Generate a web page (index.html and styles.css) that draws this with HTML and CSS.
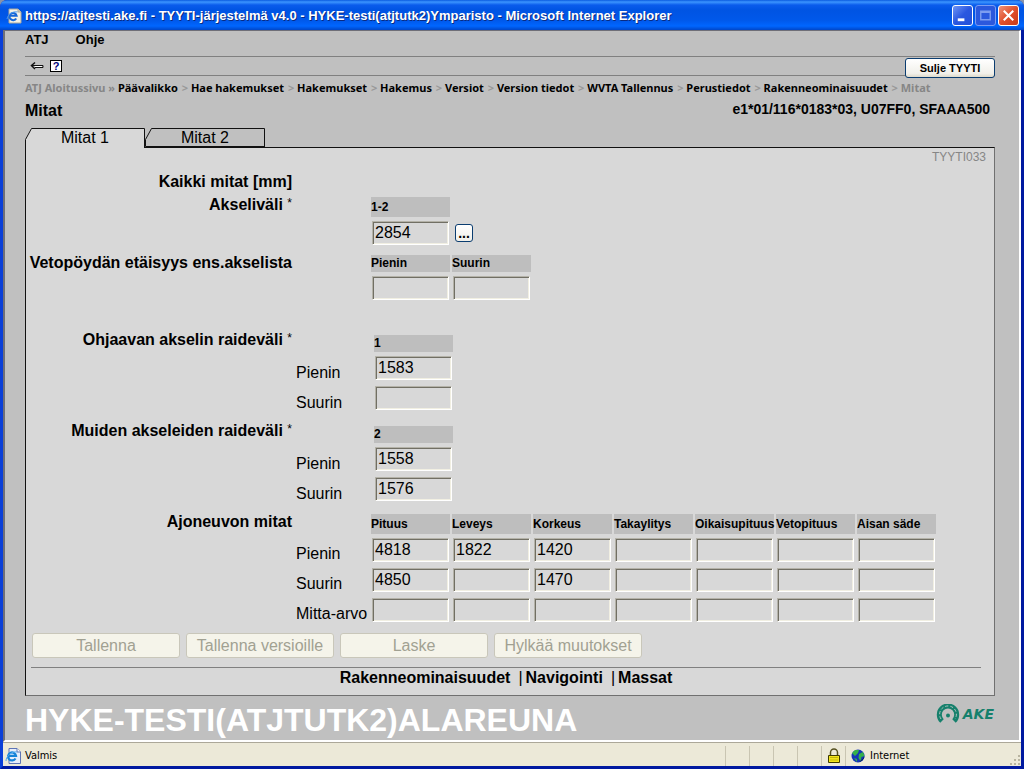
FILE: index.html
```html
<!DOCTYPE html>
<html lang="fi">
<head>
<meta charset="utf-8">
<title>TYYTI-järjestelmä v4.0</title>
<link rel="stylesheet" href="styles.css">
</head>
<body>
<div class="window">
  <header class="titlebar">
    <svg class="title-icon" viewBox="0 0 16 16" aria-hidden="true">
      <path d="M3 1h9l3 3v11H3z" fill="#f4f1e6" stroke="#a9a79b" stroke-width="1"/>
      <path d="M12 1v3h3" fill="#d5d2c4" stroke="#a9a79b" stroke-width="1"/>
      <path d="M10.2 10.4A3.6 3.6 0 1 1 10.600 7.700H4.500" fill="none" stroke="#1667d8" stroke-width="2"/>
      <path d="M1 11C2 6 7 3 11.500 4" fill="none" stroke="#4b9bf0" stroke-width="1"/>
    </svg>
    <h1 class="title-text">https://atjtesti.ake.fi - TYYTI-järjestelmä v4.0 - HYKE-testi(atjtutk2)Ymparisto - Microsoft Internet Explorer</h1>
    <div class="window-buttons">
      <button class="win-btn" type="button" aria-label="Minimize"><svg viewBox="0 0 20 20"><path d="M5 13h7v3H5z" fill="#fff"/></svg></button>
      <button class="win-btn win-btn-dim" type="button" aria-label="Maximize"><svg viewBox="0 0 20 20"><path d="M5 5.500h10v9H5zM5 6.500h10" fill="none" stroke="#7d9cf0" stroke-width="1.500"/></svg></button>
      <button class="win-btn win-btn-close" type="button" aria-label="Close"><svg viewBox="0 0 20 20"><path d="M5 5l10 10M15 5L5 15" stroke="#fff" stroke-width="2.200"/></svg></button>
    </div>
  </header>

  <div class="frame">
    <main class="page">
      <nav class="menu">
        <a href="#">ATJ</a>
        <a href="#">Ohje</a>
      </nav>
      <div class="toolbar">
        <div class="tools">
          <button class="tool" type="button" aria-label="Takaisin"><svg width="14" height="10" viewBox="0 0 14 10"><path d="M5 5.500h7" fill="none" stroke="#fff"/><path d="M5 1.500L1.500 4.500 5 8" fill="none" stroke="#111" stroke-width="1.500"/><path d="M2 4.500H13v2H5" fill="none" stroke="#111"/></svg></button>
          <button class="tool help" type="button" aria-label="Ohje">?</button>
        </div>
        <button class="close-app" type="button">Sulje TYYTI</button>
      </div>
      <nav class="crumbs"><span>ATJ Aloitussivu »</span> <a href="#">Päävalikko</a> <i>&gt;</i> <a href="#">Hae hakemukset</a> <i>&gt;</i> <a href="#">Hakemukset</a> <i>&gt;</i> <a href="#">Hakemus</a> <i>&gt;</i> <a href="#">Versiot</a> <i>&gt;</i> <a href="#">Version tiedot</a> <i>&gt;</i> <a href="#">WVTA Tallennus</a> <i>&gt;</i> <a href="#">Perustiedot</a> <i>&gt;</i> <a href="#">Rakenneominaisuudet</a> <i>&gt;</i> <span>Mitat</span></nav>
      <div class="heading">
        <h2>Mitat</h2>
        <strong>e1*01/116*0183*03, U07FF0, SFAAA500</strong>
      </div>

      <div class="tabs">
        <button class="tab tab-active" type="button">
          <svg viewBox="0 0 120 20" aria-hidden="true"><path d="M0 20V12L6 0H120V20z" fill="#d8d8d8"/><path d="M.5 20V11.500L6.500.5H119.500V20" fill="none" stroke="#111"/></svg>
          <span>Mitat 1</span>
        </button>
        <button class="tab" type="button">
          <svg viewBox="0 0 120 20" aria-hidden="true"><path d="M.5 18.500V11.500L6.500.5H119.500V20M.5 18.500H119.500" fill="none" stroke="#111"/></svg>
          <span>Mitat 2</span>
        </button>
      </div>

      <form class="panel">
        <div class="code">TYYTI033</div>
        <div class="group group-first"><div class="label">Kaikki mitat [mm]</div></div>

        <div class="group g1">
          <div class="label">Akseliväli <sup>*</sup></div>
          <table class="fields">
            <tr><td class="side"></td><th class="col">1-2</th></tr>
            <tr><td class="side"></td><td><input aria-label="Akseliväli 1-2" value="2854"></td><td><button class="more" type="button">...</button></td></tr>
          </table>
        </div>

        <div class="group g2">
          <div class="label">Vetopöydän etäisyys ens.akselista</div>
          <table class="fields short">
            <tr><td class="side"></td><th class="col">Pienin</th><th class="col">Suurin</th></tr>
            <tr><td class="side"></td><td><input aria-label="Vetopöytä pienin"></td><td><input aria-label="Vetopöytä suurin"></td></tr>
          </table>
        </div>

        <div class="group g3">
          <div class="label">Ohjaavan akselin raideväli <sup>*</sup></div>
          <table class="fields short inset">
            <tr><td class="side"></td><th class="col">1</th></tr>
            <tr><th class="side"><label for="o1">Pienin</label></th><td><input id="o1" value="1583"></td></tr>
            <tr><th class="side"><label for="o2">Suurin</label></th><td><input id="o2"></td></tr>
          </table>
        </div>

        <div class="group g4">
          <div class="label">Muiden akseleiden raideväli <sup>*</sup></div>
          <table class="fields short inset">
            <tr><td class="side"></td><th class="col">2</th></tr>
            <tr><th class="side"><label for="m1">Pienin</label></th><td><input id="m1" value="1558"></td></tr>
            <tr><th class="side"><label for="m2">Suurin</label></th><td><input id="m2" value="1576"></td></tr>
          </table>
        </div>

        <div class="group g5">
          <div class="label">Ajoneuvon mitat</div>
          <table class="fields">
            <tr><td class="side"></td><th class="col">Pituus</th><th class="col">Leveys</th><th class="col">Korkeus</th><th class="col">Takaylitys</th><th class="col">Oikaisupituus</th><th class="col">Vetopituus</th><th class="col">Aisan säde</th></tr>
            <tr><th class="side"><label for="a1">Pienin</label></th><td><input id="a1" value="4818"></td><td><input aria-label="Leveys pienin" value="1822"></td><td><input aria-label="Korkeus pienin" value="1420"></td><td><input aria-label="Takaylitys pienin"></td><td><input aria-label="Oikaisupituus pienin"></td><td><input aria-label="Vetopituus pienin"></td><td><input aria-label="Aisan säde pienin"></td></tr>
            <tr><th class="side"><label for="a2">Suurin</label></th><td><input id="a2" value="4850"></td><td><input aria-label="Leveys suurin"></td><td><input aria-label="Korkeus suurin" value="1470"></td><td><input aria-label="Takaylitys suurin"></td><td><input aria-label="Oikaisupituus suurin"></td><td><input aria-label="Vetopituus suurin"></td><td><input aria-label="Aisan säde suurin"></td></tr>
            <tr><th class="side"><label for="a3">Mitta-arvo</label></th><td><input id="a3"></td><td><input aria-label="Leveys mitta-arvo"></td><td><input aria-label="Korkeus mitta-arvo"></td><td><input aria-label="Takaylitys mitta-arvo"></td><td><input aria-label="Oikaisupituus mitta-arvo"></td><td><input aria-label="Vetopituus mitta-arvo"></td><td><input aria-label="Aisan säde mitta-arvo"></td></tr>
          </table>
        </div>

        <div class="actions">
          <button type="button" disabled>Tallenna</button>
          <button type="button" disabled>Tallenna versioille</button>
          <button type="button" disabled>Laske</button>
          <button type="button" disabled>Hylkää muutokset</button>
        </div>
        <nav class="links"><a href="#">Rakenneominaisuudet</a><a href="#">Navigointi</a><a href="#">Massat</a></nav>
      </form>

      <footer class="footer">
        <strong>HYKE-TESTI(ATJTUTK2)ALAREUNA</strong>
        <div class="brand">
          <svg width="24" height="20" viewBox="0 0 24 20" aria-hidden="true">
            <path d="M6 17A8.700 8.700 0 1 1 18 17" fill="none" stroke="#16806c" stroke-width="5"/>
            <path d="M5 15A8.400 8.400 0 1 1 19 15" fill="none" stroke="#b0c4c0" stroke-width="1" stroke-dasharray="3 2"/>
            <circle cx="12" cy="11.500" r="2" fill="#16806c"/>
          </svg>
          <span>AKE</span>
        </div>
      </footer>
    </main>

    <div class="status">
      <div class="status-main">
        <svg width="16" height="16" viewBox="0 0 16 16" aria-hidden="true">
          <path d="M4 .5h8l3.500 3.500v11.500H4z" fill="#e8eefb" stroke="#5d74b5"/>
          <path d="M12 .5v3.500h3.500" fill="#fff" stroke="#5d74b5"/>
          <path d="M10.500 10.500A4 4 0 1 1 11 7.800H3.500" fill="none" stroke="#1683d8" stroke-width="2.200"/>
          <path d="M1 13C1 8 7 3 12 4" fill="none" stroke="#53aaf0"/>
        </svg>
        <span>Valmis</span>
      </div>
      <div class="status-cell"></div><div class="status-cell"></div><div class="status-cell"></div><div class="status-cell"></div>
      <div class="status-cell">
        <svg width="14" height="16" viewBox="0 0 14 16" aria-hidden="true"><path d="M3.500 8V4.500a3.500 3.500 0 0 1 7 0V8" fill="none" stroke="#555020" stroke-width="1.500"/><path d="M1.500 7.500h11v7h-11z" fill="#f3e51c" stroke="#3f3b00"/><path d="M3 9.500h8M3 12h8" stroke="#c4b710"/></svg>
      </div>
      <div class="status-zone">
        <svg width="14" height="14" viewBox="0 0 14 14" aria-hidden="true"><circle cx="7" cy="7" r="6.500" fill="#1436b8"/><path d="M1 4l3-3 4 0-1 3-3 3zM8 5l4-2 1.500 4-3 1-1 4-2-3zM3 9l3 1v3z" fill="#35b04a"/><path d="M8 13a6 6 0 0 0 5.500-6l-2 3z" fill="#071b5c"/></svg>
        <span>Internet</span>
      </div>
      <svg class="grip" width="12" height="12" viewBox="0 0 12 12" aria-hidden="true"><path d="M9 1h2v2H9zM5 5h2v2H5zM9 5h2v2H9zM1 9h2v2H1zM5 9h2v2H5zM9 9h2v2H9z" fill="#b8b4a0"/></svg>
    </div>
  </div>
</div>
</body>
</html>
```
FILE: styles.css
```css
* { box-sizing: border-box; }
body {
  margin: 0;
  font: 16px "Liberation Sans", Arial, sans-serif;
  color: #000;
  background: #8a93a8;
}
button, input { font: inherit; color: inherit; }
button { padding: 0; }
a { color: inherit; text-decoration: none; }
.window {
  min-height: 100vh;
  display: flex;
  flex-direction: column;
  background: #0a2cc0;
  border-radius: 7px 7px 0 0;
  overflow: hidden;
}

.titlebar {
  height: 30px;
  display: flex;
  align-items: center;
  gap: 3px;
  padding: 1px 5px 0 6px;
  background: linear-gradient(#0a5be0 0, #3c95ff 2px, #0a5cec 5px, #0054e3 10px, #0058ea 20px, #0066ff 26px, #0046c8 30px);
}
.title-icon { width: 16px; height: 16px; flex: none; }
.title-text {
  flex: 1;
  margin: 0;
  font: bold 13px "Liberation Sans", Arial, sans-serif;
  color: #fff;
  text-shadow: 1px 1px 0 #0a2a80;
  white-space: nowrap;
}
.window-buttons { display: flex; gap: 2px; }
.win-btn {
  width: 21px;
  height: 21px;
  border: 1px solid #fff;
  border-radius: 3px;
  background: linear-gradient(135deg, #6f95f5, #2a57e0 50%, #2450d8);
}
.win-btn svg { display: block; width: 19px; height: 19px; }
.win-btn-dim { border-color: #7b9cf3; background: #2b58dd; }
.win-btn-close { background: linear-gradient(135deg, #f0937a, #e0502c 50%, #c93a18); }

.frame {
  flex: 1;
  display: flex;
  flex-direction: column;
  border: solid #0a3fd8;
  border-width: 0 3px 3px;
  border-right-color: #0019a0;
  border-bottom-color: #0019a0;
}
.page {
  flex: 1;
  display: flex;
  flex-direction: column;
  padding: 0 24px 0 20px;
  background: #c0c0c0;
  border: 1px solid #6f6f78;
  border-width: 1px 2px 2px;
  border-right-color: #fff;
  border-bottom-color: #fff;
}
.menu {
  display: flex;
  gap: 27px;
  font-weight: bold;
  font-size: 13px;
  line-height: 18px;
  padding-bottom: 7px;
}
.toolbar {
  height: 20px;
  display: flex;
  align-items: center;
  justify-content: space-between;
  border: solid #808080;
  border-width: 1px 0;
}
.tools { display: flex; align-items: center; gap: 6px; padding-left: 5px; }
.tool { border: 0; background: none; }
.tool svg { display: block; }
.help {
  width: 12px;
  height: 12px;
  border: 1px solid #000;
  background: #fff;
  color: #00007a;
  font-weight: bold;
  font-size: 11px;
  line-height: 10px;
}
.close-app {
  width: 90px;
  height: 20px;
  margin-top: 4px;
  border: 1px solid #0b3d70;
  border-radius: 3px;
  background: linear-gradient(#fff, #f1f0ea 80%, #dedacb);
  font-weight: bold;
  font-size: 11px;
}
.crumbs {
  padding-top: 4px;
  font: bold 11px/16px "Noto Sans", "Liberation Sans", sans-serif;
  color: #868686;
}
.crumbs a { color: #000; }
.crumbs i { margin-left: 1px; font-style: normal; color: #999; }
.heading {
  display: flex;
  justify-content: space-between;
  padding: 5px 5px 7px 0;
  line-height: 20px;
}
.heading h2 { margin: 0; font-size: 16px; }
.heading strong { font-size: 14px; line-height: 16px; }

.tabs { display: flex; }
.tab {
  position: relative;
  width: 120px;
  height: 20px;
  margin-bottom: -1px;
  border: 0;
  background: none;
  line-height: 20px;
}
.tab-active { z-index: 1; }
.tab svg { position: absolute; inset: 0; width: 120px; height: 20px; }
.tab span { position: relative; }

.panel {
  background: #d8d8d8;
  border: 1px solid #111;
  border-right-color: #707070;
  border-bottom-color: #707070;
}
.code {
  padding-right: 8px;
  text-align: right;
  font-size: 12px;
  line-height: 18px;
  color: #868686;
}
.group { display: grid; grid-template-columns: 266px 1fr; column-gap: 2px; }
.group-first { margin-top: 8px; }
.g1 { margin-top: 7px; }
.g2 { margin-top: 8px; }
.g3 { margin-top: 30px; }
.g4 { margin-top: 11px; }
.g5 { margin-top: 11px; }
.label {
  font-weight: bold;
  line-height: 16px;
  text-align: right;
  white-space: nowrap;
}
.label sup { font-weight: normal; font-size: 12px; line-height: 0; vertical-align: 3px; }
.fields { justify-self: start; border-spacing: 2px 0; }
.fields td, .fields th { padding: 0; text-align: left; }
.inset { margin-top: 3px; }
.fields .side { width: 73px; min-width: 73px; font-weight: normal; line-height: 18px; vertical-align: top; }
.inset .side { width: 76px; min-width: 76px; }
.fields th.side { padding-top: 11px; }
.fields.inset th.side { padding-top: 12px; }
.fields .col {
  width: 79px;
  min-width: 79px;
  max-width: 79px;
  height: 20px;
  background: #bebebe;
  font-size: 12px;
  line-height: 17px;
  white-space: nowrap;
}
.short .col { height: 17px; }
.fields td:not(.side) { height: 30px; padding: 4px 0 2px 1px; }
.fields input {
  display: block;
  width: 77px;
  height: 24px;
  padding: 0 2px;
  border: 1px solid #b4b2a8;
  border-right-color: #fff;
  border-bottom-color: #fff;
  box-shadow: inset 1px 1px 0 #716f64, inset -1px -1px 0 #f1efe2;
  background: #d8d8d8;
}
.more {
  display: block;
  width: 18px;
  height: 18px;
  margin-left: 2px;
  border: 1px solid #0b3d70;
  border-radius: 3px;
  background: linear-gradient(#fff, #f1f0ea);
  font-weight: bold;
  font-size: 14px;
  line-height: 16px;
}
.actions {
  display: flex;
  gap: 6px;
  margin: 9px 13px 0 5px;
  padding: 0 0 9px 1px;
  border-bottom: 1px solid #808080;
}
.actions button {
  width: 148px;
  height: 25px;
  border: 1px solid #c9c7ba;
  border-radius: 3px;
  background: #f5f4ea;
  color: #a1a192;
}
.links {
  display: flex;
  justify-content: center;
  padding: 1px 13px 8px 5px;
  font-weight: bold;
  line-height: 18px;
}
.links a + a { margin-left: 8px; }
.links a + a::before { content: "|"; margin-right: 3px; font-weight: normal; }
.footer {
  flex: 1;
  display: flex;
  align-items: center;
  justify-content: space-between;
  padding-top: 3px;
  color: #fff;
  font-size: 32px;
  line-height: 40px;
}
.brand {
  display: flex;
  align-items: center;
  gap: 3px;
  margin-bottom: 12px;
  padding-right: 1px;
  color: #16806c;
  font: italic bold 14px "DejaVu Sans", sans-serif;
}

.status {
  height: 24px;
  display: flex;
  align-items: center;
  padding-top: 2px;
  border-top: 1px solid #aca899;
  background: #ece9d8;
  font: 11px "DejaVu Sans Condensed", "DejaVu Sans", sans-serif;
}
.status-main { flex: 1; display: flex; align-items: center; gap: 4px; padding-left: 2px; }
.status-cell {
  width: 24px;
  height: 20px;
  display: flex;
  align-items: center;
  justify-content: center;
  border-left: 1px solid #c9c5b2;
}
.status-zone {
  width: 164px;
  height: 20px;
  display: flex;
  align-items: center;
  gap: 5px;
  padding-left: 5px;
  border-left: 1px solid #c9c5b2;
}
.grip { align-self: flex-end; }
```
